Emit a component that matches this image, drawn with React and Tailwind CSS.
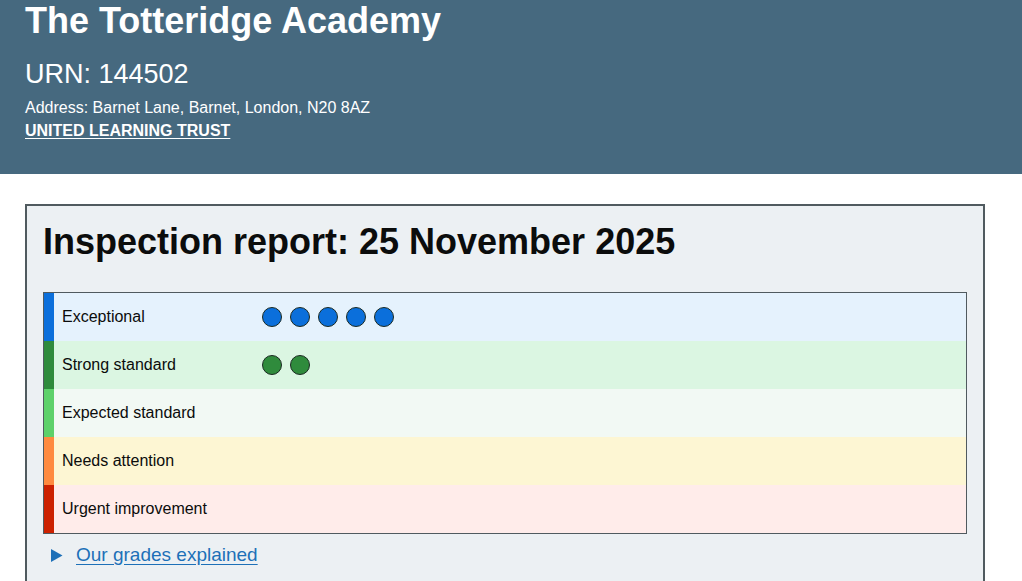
import React from "react";

const rows = [
  { label: "Exceptional", stripe: "bg-[#0b6fdb]", bg: "bg-[#e5f2fd]", dots: 5, dot: "bg-[#0b6fdb]" },
  { label: "Strong standard", stripe: "bg-[#2f8b3c]", bg: "bg-[#dbf6e2]", dots: 2, dot: "bg-[#2f8b3c]" },
  { label: "Expected standard", stripe: "bg-[#5ed16a]", bg: "bg-[#f2f9f4]", dots: 0, dot: "" },
  { label: "Needs attention", stripe: "bg-[#ff8a3f]", bg: "bg-[#fdf6d3]", dots: 0, dot: "" },
  { label: "Urgent improvement", stripe: "bg-[#cc2100]", bg: "bg-[#ffecea]", dots: 0, dot: "" },
];

export default function App() {
  return (
    <div className="min-h-[581px] bg-white text-[#0b0c0c]" style={{ fontFamily: '"Liberation Sans", Arial, sans-serif' }}>
      <header className="bg-[#46697f] text-white px-[25px] pt-px pb-[33px]">
        <h1 className="text-[36px] leading-[40px] font-bold">The Totteridge Academy</h1>
        <p className="mt-[17px] text-[27px] leading-[32px]">URN: 144502</p>
        <p className="mt-[8px] text-[16px] leading-[20px]">Address: Barnet Lane, Barnet, London, N20 8AZ</p>
        <p className="mt-[3px] text-[16px] leading-[20px] font-bold">
          <a href="#" className="underline underline-offset-[2px]">UNITED LEARNING TRUST</a>
        </p>
      </header>

      <section className="ml-[25px] mt-[30px] w-[960px] border-2 border-b-0 border-[#505a5f] bg-[#ecf0f3] px-4 pt-4 pb-[20px]">
        <h2 className="text-[36px] leading-[40px] font-bold">Inspection report: 25 November 2025</h2>
        <div className="mt-[30px] border border-[#505a5f]">
          {rows.map((r) => (
            <div key={r.label} className={`flex h-[48px] items-center ${r.bg}`}>
              <div className={`h-full w-[10px] ${r.stripe}`} />
              <div className="w-[208px] pl-2 text-[16px] leading-[20px]">{r.label}</div>
              <div className="flex gap-[8px]">
                {Array.from({ length: r.dots }).map((_, i) => (
                  <span key={i} className={`block h-[20px] w-[20px] rounded-full border border-[#1b2a22] ${r.dot}`} />
                ))}
              </div>
            </div>
          ))}
        </div>
        <div className="mt-[8px] ml-[8px] flex items-center text-[19px] leading-[25px] text-[#1d70b8]">
          <svg width="12" height="13" viewBox="0 0 12 13" className="mr-[13px] mt-[2px]">
            <polygon points="0,0 11.5,6.5 0,13" fill="#1d70b8" />
          </svg>
          <a href="#" className="underline underline-offset-[3px]">Our grades explained</a>
        </div>
      </section>
    </div>
  );
}
